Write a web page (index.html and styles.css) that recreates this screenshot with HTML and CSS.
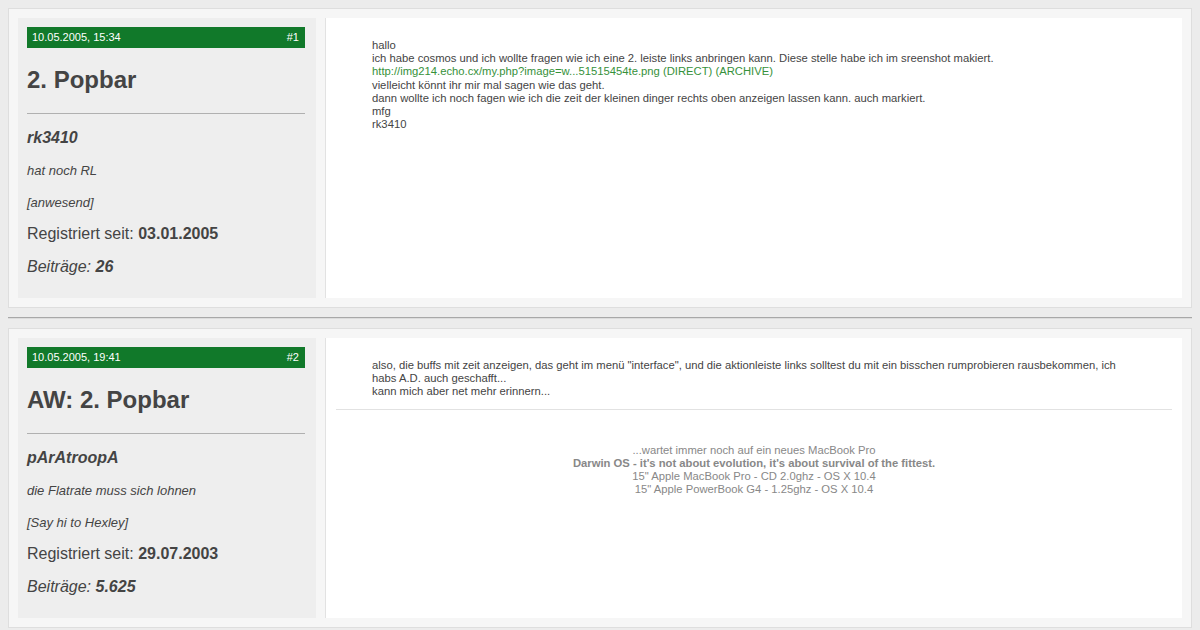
FILE: index.html
```html
<!DOCTYPE html>
<html lang="de">
<head>
    <meta charset="UTF-8">
    <title>2. Popbar</title>
    <link rel="stylesheet" href="styles.css">
</head>
<body>

    <!-- Post #1 -->
    <div class="post">
        <div class="userinfo">
            <div class="postbar">
                <span>10.05.2005, 15:34</span>
                <span>#1</span>
            </div>
            <h2 class="title">2. Popbar</h2>
            <hr class="rule">
            <div class="username">rk3410</div>
            <div class="usertitle">hat noch RL</div>
            <div class="status">[anwesend]</div>
            <div class="stat">Registriert seit: <b>03.01.2005</b></div>
            <div class="stat posts">Beiträge: <b>26</b></div>
        </div>
        <div class="message">
            <div class="text">
                hallo<br>
                ich habe cosmos und ich wollte fragen wie ich eine 2. leiste links anbringen kann. Diese stelle habe ich im sreenshot makiert.<br>
                <a href="#">http://img214.echo.cx/my.php?image=w...51515454te.png (DIRECT) (ARCHIVE)</a><br>
                vielleicht könnt ihr mir mal sagen wie das geht.<br>
                dann wollte ich noch fagen wie ich die zeit der kleinen dinger rechts oben anzeigen lassen kann. auch markiert.<br>
                mfg<br>
                rk3410
            </div>
        </div>
    </div>

    <hr class="separator">

    <!-- Post #2 -->
    <div class="post">
        <div class="userinfo">
            <div class="postbar">
                <span>10.05.2005, 19:41</span>
                <span>#2</span>
            </div>
            <h2 class="title">AW: 2. Popbar</h2>
            <hr class="rule">
            <div class="username">pArAtroopA</div>
            <div class="usertitle">die Flatrate muss sich lohnen</div>
            <div class="status">[Say hi to Hexley]</div>
            <div class="stat">Registriert seit: <b>29.07.2003</b></div>
            <div class="stat posts">Beiträge: <b>5.625</b></div>
        </div>
        <div class="message">
            <div class="text">
                also, die buffs mit zeit anzeigen, das geht im menü "interface", und die aktionleiste links solltest du mit ein bisschen rumprobieren rausbekommen, ich habs A.D. auch geschafft...<br>
                kann mich aber net mehr erinnern...
            </div>
            <div class="signature">
                ...wartet immer noch auf ein neues MacBook Pro<br>
                <b>Darwin OS - it's not about evolution, it's about survival of the fittest.</b><br>
                15" Apple MacBook Pro - CD 2.0ghz - OS X 10.4<br>
                15" Apple PowerBook G4 - 1.25ghz - OS X 10.4
            </div>
        </div>
    </div>

</body>
</html>
```

FILE: styles.css
```css
/* Global */
* {
    box-sizing: border-box;
}

body {
    margin: 8px;
    background: #ececec;
    color: #444;
    font-family: 'Liberation Sans', Arial, sans-serif;
    font-size: 11.25px;
}

/* Post box */
.post {
    display: flex;
    height: 300px;
    padding: 9px;
    background: #f6f6f6;
    border: 1px solid #dedede;
}

.userinfo {
    width: 298px;
    flex-shrink: 0;
    padding: 9px 11px 9px 9px;
    background: #eeeeee;
}

.postbar {
    display: flex;
    justify-content: space-between;
    height: 21px;
    padding: 0 6px 0 5px;
    line-height: 21px;
    font-size: 11px;
    color: #fff;
    background: #11792a;
}

.title {
    margin: 17px 0 0;
    font-size: 24px;
    line-height: 30px;
    color: #444;
}

.rule {
    margin: 18px 0 14px;
    border: none;
    border-top: 1px solid #b0b0b0;
}

.username {
    font-size: 16px;
    font-weight: bold;
    font-style: italic;
    line-height: 20px;
}

.usertitle, .status {
    margin-top: 14px;
    font-size: 13px;
    font-style: italic;
    line-height: 18px;
}

.stat {
    margin-top: 11px;
    font-size: 16px;
    line-height: 22px;
}

.posts {
    font-style: italic;
}

/* Message area */
.message {
    flex: 1;
    margin-left: 9px;
    padding: 21px 10px 0 10px;
    background: #fff;
    border-left: 1px solid #e2e2e2;
}

.text {
    padding: 0 36px;
    line-height: 13.2px;
    color: #444;
}

.text a {
    color: #36913a;
    text-decoration: none;
}

.signature {
    margin-top: 10px;
    padding-top: 34px;
    border-top: 1px solid #e2e2e2;
    text-align: center;
    line-height: 13px;
    color: #888;
}

/* Separator between posts */
.separator {
    margin: 9px 0;
    border: none;
    border-top: 1px solid #a8a8a8;
    border-bottom: 1px solid #dcdcdc;
}
```
